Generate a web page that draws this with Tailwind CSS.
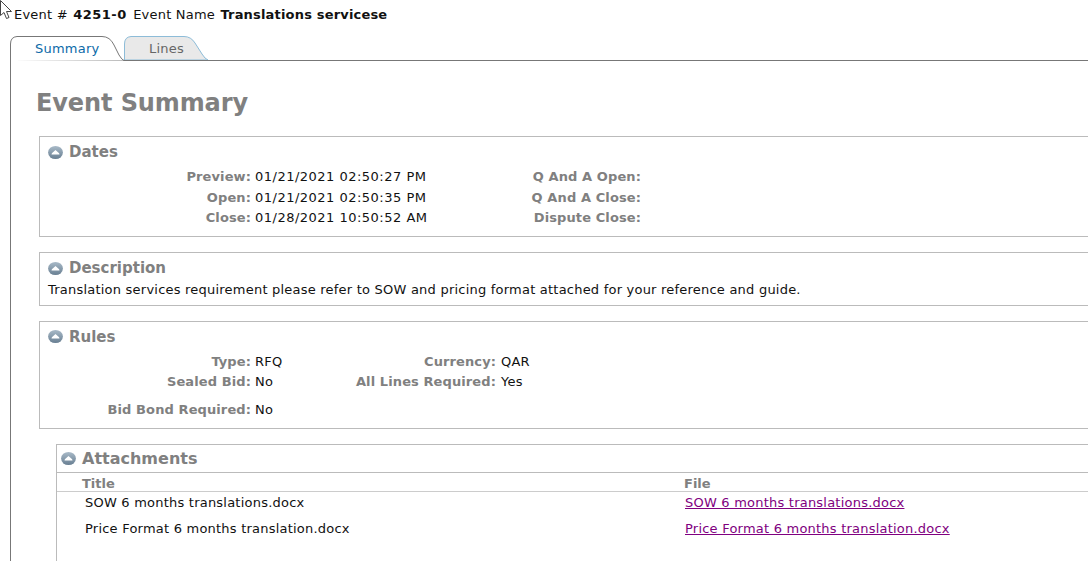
<!DOCTYPE html>
<html lang="en">

<head>
  <meta charset="UTF-8" />
  <title>Event Summary</title>
  <script src="https://cdn.jsdelivr.net/npm/@tailwindcss/browser@4"></script>
</head>

<body class="h-[561px] overflow-hidden bg-white font-['DejaVu_Sans',sans-serif] text-[13px] leading-[20px] tracking-[0.22px] text-[#111]">

  <!-- mouse cursor -->
  <svg class="absolute left-0 top-0" width="14" height="21" viewBox="0 0 14 21">
    <path d="M0.5 0.5V15.5L4 12.5L6.5 18.5L9 17.5L6.5 11.5H11.5Z" fill="#fff" stroke="#444" stroke-width="1" />
  </svg>

  <div class="h-[36px] pl-[14px] pt-[5px]">
    Event # <b class="ml-[1px] tracking-[0.5px]">4251-0</b> <span class="ml-[2px]">Event Name</span> <b class="ml-[1px] tracking-[0.18px]">Translations servicese</b>
  </div>

  <!-- tabs -->
  <div class="relative ml-[10px] flex h-[25px] border-b border-[#777]">
    <div class="relative z-10 h-[25px] w-[114px] pl-[25px] pt-[3px] text-[#0b6aa8]">
      <svg class="absolute left-0 top-0" width="114" height="25" viewBox="0 0 114 25">
        <path d="M0.5 25V8Q0.5 1 7 0.5H92Q100 0.5 104 9L109 19Q112 24 114 24.5" fill="#fff" stroke="#777" />
      </svg>
      <span class="relative">Summary</span>
    </div>
    <div class="relative h-[24px] w-[84px] pl-[25px] pt-[3px] text-[#666]">
      <svg class="absolute left-0 top-0" width="84" height="24" viewBox="0 0 84 24">
        <path d="M0.5 24V8Q0.5 1 7 0.5H60Q67 0.5 71 7L78 18Q81 23 84 24Z" fill="#e9e9e9" stroke="#8dbcd8" />
      </svg>
      <span class="relative">Lines</span>
    </div>
  </div>

  <div class="ml-[10px] h-[500px] border-l border-[#777] pl-[28px]">
    <h1 class="-ml-[3px] pt-[25px] text-[24px] font-bold leading-[34px] tracking-[-0.1px] text-[#808080]">Event Summary</h1>

    <!-- Dates -->
    <section class="mt-[16px] h-[101px] border border-r-0 border-[#bbb]">
      <div class="flex h-[29px] items-center gap-[6px] pl-[8px] pt-[1px]">
        <svg width="15" height="15" viewBox="0 0 15 15">
          <defs>
            <linearGradient id="ball" x1="0" y1="0" x2="0" y2="1">
              <stop offset="0" stop-color="#a9bac8" />
              <stop offset="1" stop-color="#687f92" />
            </linearGradient>
          </defs>
          <ellipse cx="7.5" cy="7.5" rx="7.4" ry="6.6" fill="url(#ball)" />
          <path d="M3.5 9.5Q3.5 8 5 7.2L7.5 5L10 7.2Q11.5 8 11.5 9.5Z" fill="#fff" />
        </svg>
        <h2 class="text-[15px] font-bold tracking-normal text-[#808080]">Dates</h2>
      </div>
      <div class="flex pt-[1px]">
        <dl class="grid w-[480px] grid-cols-[211px_1fr] gap-x-[4px] leading-[20.5px]">
          <dt class="text-right font-bold tracking-[0.1px] text-[#808080]">Preview:</dt><dd class="tracking-[0.49px]">01/21/2021 02:50:27 PM</dd>
          <dt class="text-right font-bold tracking-[0.1px] text-[#808080]">Open:</dt><dd class="tracking-[0.49px]">01/21/2021 02:50:35 PM</dd>
          <dt class="text-right font-bold tracking-[0.1px] text-[#808080]">Close:</dt><dd class="tracking-[0.49px]">01/28/2021 10:50:52 AM</dd>
        </dl>
        <dl class="w-[121px] text-right font-bold leading-[20.5px] tracking-[0.1px] text-[#808080]">
          <dt>Q And A Open:</dt>
          <dt>Q And A Close:</dt>
          <dt>Dispute Close:</dt>
        </dl>
      </div>
    </section>

    <!-- Description -->
    <section class="mt-[15px] h-[54px] border border-r-0 border-[#bbb]">
      <div class="flex h-[27px] items-center gap-[6px] pl-[8px] pt-[3px]">
        <svg width="15" height="15" viewBox="0 0 15 15">
          <ellipse cx="7.5" cy="7.5" rx="7.4" ry="6.6" fill="url(#ball)" />
          <path d="M3.5 9.5Q3.5 8 5 7.2L7.5 5L10 7.2Q11.5 8 11.5 9.5Z" fill="#fff" />
        </svg>
        <h2 class="text-[15px] font-bold tracking-normal text-[#808080]">Description</h2>
      </div>
      <p class="pl-[8px]">Translation services requirement please refer to SOW and pricing format attached for your reference and guide.</p>
    </section>

    <!-- Rules -->
    <section class="mt-[15px] h-[108px] border border-r-0 border-[#bbb]">
      <div class="flex h-[29px] items-center gap-[6px] pl-[8px]">
        <svg width="15" height="15" viewBox="0 0 15 15">
          <ellipse cx="7.5" cy="7.5" rx="7.4" ry="6.6" fill="url(#ball)" />
          <path d="M3.5 9.5Q3.5 8 5 7.2L7.5 5L10 7.2Q11.5 8 11.5 9.5Z" fill="#fff" />
        </svg>
        <h2 class="text-[15px] font-bold tracking-normal text-[#808080]">Rules</h2>
      </div>
      <div class="grid grid-cols-[211px_93px_144px_1fr] gap-x-[4px] pt-[1px] leading-[20px]">
        <span class="text-right font-bold tracking-[0.1px] text-[#808080]">Type:</span><span>RFQ</span>
        <span class="text-right font-bold tracking-[0.1px] text-[#808080]">Currency:</span><span class="ml-[1px]">QAR</span>
        <span class="text-right font-bold tracking-[0.1px] text-[#808080]">Sealed Bid:</span><span>No</span>
        <span class="whitespace-nowrap text-right font-bold tracking-[0.1px] text-[#808080]">All Lines Required:</span><span class="ml-[1px]">Yes</span>
        <span class="mt-[8px] text-right font-bold tracking-[0.1px] text-[#808080]">Bid Bond Required:</span><span class="mt-[8px]">No</span>
      </div>
    </section>

    <!-- Attachments -->
    <section class="ml-[17px] mt-[15px] h-[120px] border-l border-t border-[#bbb]">
      <div class="flex h-[28px] items-center gap-[6px] border-b border-[#bbb] pl-[4px]">
        <svg width="15" height="15" viewBox="0 0 15 15">
          <ellipse cx="7.5" cy="7.5" rx="7.4" ry="6.6" fill="url(#ball)" />
          <path d="M3.5 9.5Q3.5 8 5 7.2L7.5 5L10 7.2Q11.5 8 11.5 9.5Z" fill="#fff" />
        </svg>
        <h2 class="text-[16px] font-bold tracking-normal text-[#808080]">Attachments</h2>
      </div>
      <div class="flex h-[19px] border-b border-[#ccc] pl-[25px] pt-[2px] font-bold leading-[18px] tracking-normal text-[#808080]">
        <span class="w-[602px]">Title</span><span>File</span>
      </div>
      <div class="flex h-[26px] pl-[28px] pt-[1px]">
        <span class="w-[600px]">SOW 6 months translations.docx</span>
        <a href="#" class="text-[#800080] underline">SOW 6 months translations.docx</a>
      </div>
      <div class="flex h-[26px] pl-[28px] pt-[1px]">
        <span class="w-[600px]">Price Format 6 months translation.docx</span>
        <a href="#" class="text-[#800080] underline">Price Format 6 months translation.docx</a>
      </div>
    </section>
  </div>

</body>

</html>
